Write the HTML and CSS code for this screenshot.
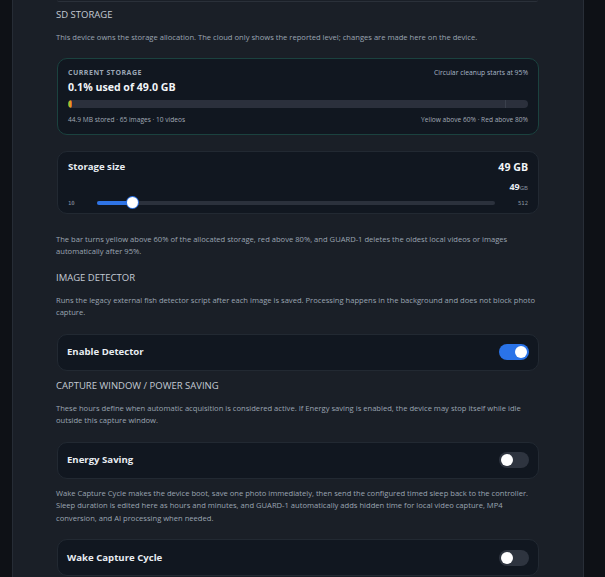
FILE: index.html
```html
<!DOCTYPE html>
<html lang="en">
<head>
    <meta charset="UTF-8">
    <meta name="viewport" content="width=device-width, initial-scale=1.0">
    <title>Device Settings</title>
    <link rel="stylesheet" href="styles.css">
</head>
<body>

<div class="panel">
    <!-- end of the card above -->
    <div class="card-edge"></div>

    <!-- SD storage -->
    <h2 class="section-title first">SD STORAGE</h2>
    <p class="hint">This device owns the storage allocation. The cloud only shows the reported level; changes are made here on the device.</p>

    <div class="card storage-card">
        <div class="row">
            <span class="eyebrow">CURRENT STORAGE</span>
            <span class="cleanup">Circular cleanup starts at 95%</span>
        </div>
        <div class="usage">0.1% used of 49.0 GB</div>
        <div class="usage-bar">
            <div class="usage-fill" style="width: 4px"></div>
            <div class="usage-mark"></div>
        </div>
        <div class="row small">
            <span>44.9 MB stored · 65 images · 10 videos</span>
            <span>Yellow above 60% · Red above 80%</span>
        </div>
    </div>

    <div class="card size-card">
        <div class="row">
            <span class="label">Storage size</span>
            <span class="size-value">49 GB</span>
        </div>
        <div class="size-input"><b>49</b><small>GB</small></div>
        <div class="slider-row">
            <span class="mono">10</span>
            <div class="slider">
                <div class="slider-fill" style="width: 35px"></div>
                <div class="slider-thumb"></div>
            </div>
            <span class="mono">512</span>
        </div>
    </div>

    <p class="hint spaced">The bar turns yellow above 60% of the allocated storage, red above 80%, and GUARD-1 deletes the oldest local videos or images automatically after 95%.</p>

    <!-- Image detector -->
    <h2 class="section-title">IMAGE DETECTOR</h2>
    <p class="hint">Runs the legacy external fish detector script after each image is saved. Processing happens in the background and does not block photo capture.</p>

    <div class="card toggle-card">
        <span class="label">Enable Detector</span>
        <span class="toggle on"><span class="knob"></span></span>
    </div>

    <!-- Capture window -->
    <h2 class="section-title close">CAPTURE WINDOW / POWER SAVING</h2>
    <p class="hint">These hours define when automatic acquisition is considered active. If Energy saving is enabled, the device may stop itself while idle outside this capture window.</p>

    <div class="card toggle-card">
        <span class="label">Energy Saving</span>
        <span class="toggle"><span class="knob"></span></span>
    </div>

    <p class="hint after-card">Wake Capture Cycle makes the device boot, save one photo immediately, then send the configured timed sleep back to the controller. Sleep duration is edited here as hours and minutes, and GUARD-1 automatically adds hidden time for local video capture, MP4 conversion, and AI processing when needed.</p>

    <div class="card toggle-card">
        <span class="label">Wake Capture Cycle</span>
        <span class="toggle"><span class="knob"></span></span>
    </div>
</div>

</body>
</html>
```

FILE: styles.css
```css
body {
  margin: 0;
  background: #0e1116;
  font-family: 'Segoe UI', 'Open Sans', sans-serif;
  color: #9aa4b1;
  height: 577px;
  overflow: hidden;
}

.panel {
  margin-left: 12px;
  width: 483px;
  height: 577px;
  padding: 0 44px 0 43px;
  background: #1a1f27;
  border-left: 1px solid #262c35;
  border-right: 1px solid #282e37;
  overflow: hidden;
}

.card-edge {
  height: 1px;
  margin: 0 1px 0 1px;
  border-bottom: 1px solid #2a3039;
  border-radius: 0 0 10px 10px;
}

.section-title {
  margin: 14px 0 0;
  font-size: 9.5px;
  line-height: 14px;
  font-weight: 400;
  color: #c3cad3;
}

.section-title.first {
  margin-top: 6px;
}

.section-title.close {
  margin-top: 8px;
}

.hint {
  margin: 10px 0 0;
  font-size: 7.6px;
  line-height: 11.8px;
  color: #9ba5b2;
}

.hint.spaced {
  margin-top: 20px;
}

.hint.after-card {
  margin-top: 8px;
  line-height: 12.5px;
}

.card {
  margin-top: 15px;
  margin-left: 1px;
  background: #111720;
  border: 1px solid #222932;
  border-radius: 10px;
  box-sizing: border-box;
}

.row {
  display: flex;
  justify-content: space-between;
  align-items: center;
}

/* current storage */
.storage-card {
  height: 77px;
  margin-top: 14px;
  padding: 9px 10px 0 10px;
  border-color: #1b423f;
}

.eyebrow {
  font-size: 7px;
  line-height: 10px;
  font-weight: 700;
  letter-spacing: 0.5px;
  color: #9ba6b5;
}

.cleanup {
  font-size: 6.8px;
  line-height: 10px;
  color: #a8b6c7;
}

.usage {
  margin-top: 2px;
  font-size: 10.6px;
  line-height: 14px;
  font-weight: 700;
  color: #f2f5f8;
}

.usage-bar {
  position: relative;
  margin-top: 6px;
  height: 8px;
  border-radius: 4px;
  background: #2b303c;
  overflow: hidden;
}

.usage-fill {
  height: 100%;
  border-radius: 4px;
  background: linear-gradient(90deg, #27b24a, #e1b820, #e2452c);
}

.usage-mark {
  position: absolute;
  top: 0;
  left: 95%;
  width: 1px;
  height: 100%;
  background: #3a404c;
}

.row.small {
  margin-top: 7px;
  font-size: 6.6px;
  line-height: 10px;
  color: #a1aab6;
}

/* storage size */
.size-card {
  height: 63px;
  margin-top: 16px;
  padding: 7px 10px 0 10px;
}

.label {
  font-size: 9.6px;
  line-height: 16px;
  font-weight: 700;
  color: #e8edf2;
}

.size-value {
  font-size: 10.6px;
  line-height: 16px;
  font-weight: 700;
  color: #f2f5f8;
}

.size-input {
  margin-top: 3px;
  text-align: right;
  line-height: 12px;
  color: #e8edf2;
}

.size-input b {
  font-size: 9px;
}

.size-input small {
  font-size: 6px;
  color: #8c96a3;
}

.slider-row {
  display: flex;
  align-items: center;
  margin-top: 2px;
  height: 14px;
}

.mono {
  font-family: 'DejaVu Sans Mono', monospace;
  font-size: 5.6px;
  color: #8d97a5;
  width: 29px;
}

.mono:last-child {
  width: auto;
  margin-left: 23px;
}

.slider {
  position: relative;
  flex: 1;
  height: 4px;
  border-radius: 2px;
  background: #2b313c;
}

.slider-fill {
  height: 100%;
  border-radius: 2px;
  background: #2f74e6;
}

.slider-thumb {
  position: absolute;
  top: -4px;
  left: 30px;
  width: 11px;
  height: 11px;
  border-radius: 50%;
  background: #ffffff;
  box-shadow: 0 0 0 1px #2f74e6;
}

/* toggles */
.toggle-card {
  height: 37px;
  display: flex;
  justify-content: space-between;
  align-items: center;
  padding: 0 9px 0 9px;
}

.toggle {
  display: flex;
  align-items: center;
  width: 30px;
  height: 16px;
  padding: 0 2px;
  box-sizing: border-box;
  border-radius: 8px;
  background: #2e343f;
}

.toggle.on {
  justify-content: flex-end;
  background: #2a73e8;
}

.knob {
  width: 12px;
  height: 12px;
  border-radius: 50%;
  background: #ffffff;
}
```
